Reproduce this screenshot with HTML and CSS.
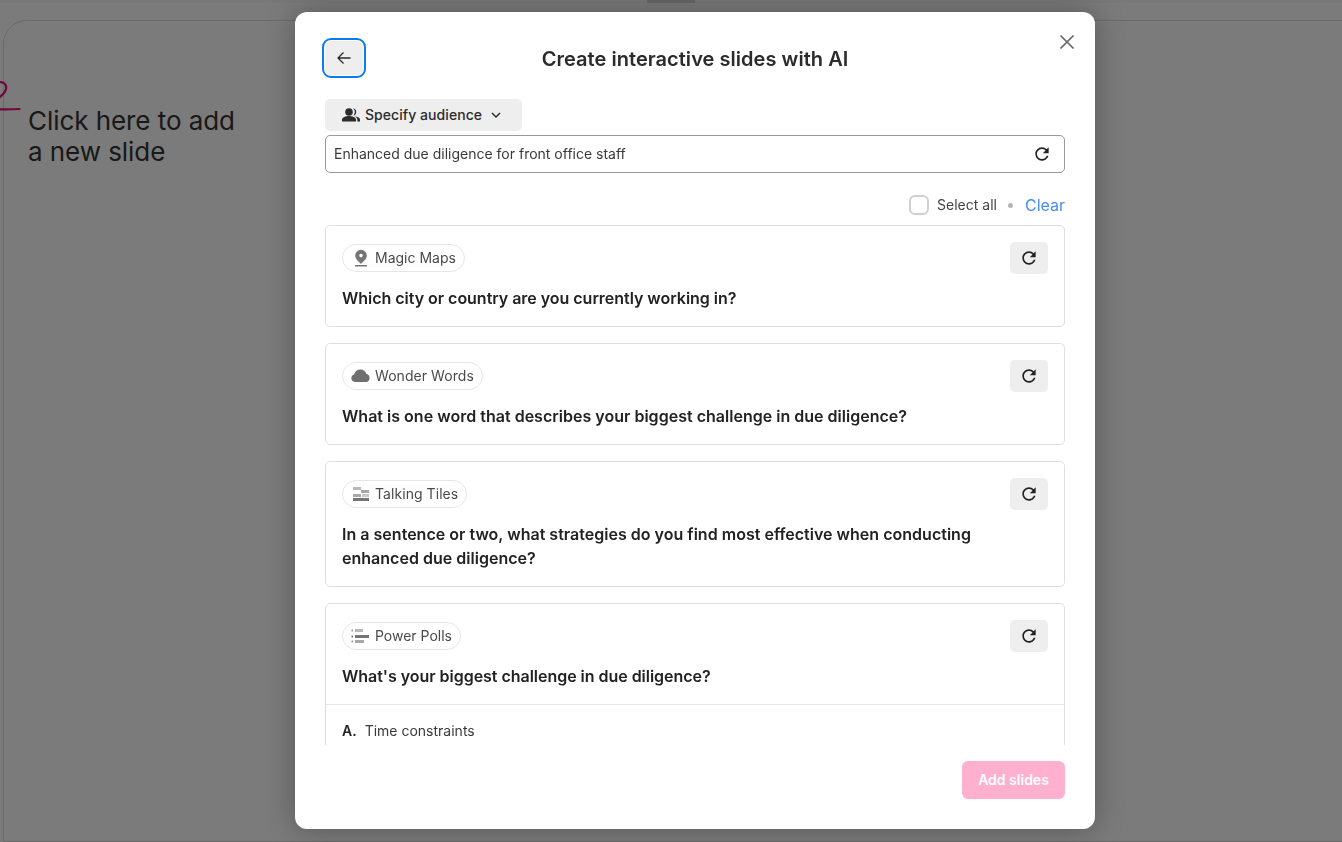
FILE: index.html
```html
<!DOCTYPE html>
<html lang="en">
<head>
<meta charset="utf-8">
<title>Create interactive slides with AI</title>
<link rel="stylesheet" href="styles.css">
</head>
<body>
<div class="page">
  <div class="topbar"><span class="tab-mark"></span></div>
  <div class="canvas">
    <svg class="scribble" width="24" height="36" viewBox="0 0 24 36"><path d="M-2 1.500C3 0 7 3 6 8C5 12 2 15 -2 17M-2 28.300C6 28.500 12 28.500 19.500 28" fill="none" stroke="#e0107c" stroke-width="2.200" stroke-linecap="round"/></svg>
    <p class="hint">Click here to add<br>a new slide</p>
  </div>
</div>
<div class="overlay"></div>
<section class="modal">
  <button class="close" aria-label="Close"><svg width="16" height="16" viewBox="0 0 16 16"><path d="M1.500 1.500L14.500 14.500M14.500 1.500L1.500 14.500" stroke="#666" stroke-width="1.700" fill="none"/></svg></button>
  <header class="head">
    <button class="back" aria-label="Back"><svg width="16" height="16" viewBox="0 0 16 16"><path d="M14.500 8H2.500M7.500 2.500L2 8L7.500 13.500" fill="none" stroke="#2b2b2b" stroke-width="1.300"/></svg></button>
    <h1>Create interactive slides with AI</h1>
  </header>
  <button class="audience">
    <svg width="20" height="20" viewBox="0 0 20 20"><g fill="#2b2b2b"><circle cx="8" cy="7" r="3.800"/><path d="M1 16.500v-2C1 12.500 5 11 8 11s7 1.500 7 3.500v2z"/><path d="M12.300 3.300a3.800 3.800 0 0 1 0 7.400 5.200 5.200 0 0 0 0-7.400z"/><path d="M13.500 11.200c2.600.3 5.500 1.500 5.500 3.300v2h-2.700v-2c0-1.300-1-2.400-2.800-3.300z"/></g></svg>
    <span class="lift">Specify audience</span>
    <svg class="chev" width="12" height="12" viewBox="0 0 12 12"><path d="M2 4L6 8L10 4" fill="none" stroke="#2b2b2b" stroke-width="1.500"/></svg>
  </button>
  <div class="topic">
    <span class="lift">Enhanced due diligence for front office staff</span>
    <svg class="refresh" width="20" height="20" viewBox="0 0 24 24"><path fill="#222" d="M17.650 6.350C16.200 4.900 14.210 4 12 4c-4.420 0-7.990 3.580-7.990 8s3.570 8 7.990 8c3.730 0 6.840-2.550 7.730-6h-2.080c-.82 2.330-3.040 4-5.650 4-3.310 0-6-2.690-6-6s2.690-6 6-6c1.660 0 3.140.69 4.220 1.780L13 11h7V4l-2.350 2.350z"/></svg>
  </div>
  <div class="select-row">
    <span class="check"></span>
    <span class="select-label lift">Select all</span>
    <span class="dot"></span>
    <span class="clear">Clear</span>
  </div>
  <div class="list">
    <article class="card">
      <div class="card-top">
        <span class="chip">
          <svg width="20" height="20" viewBox="0 0 20 20"><path fill="#757575" fill-rule="evenodd" d="M10 1.800a5.800 5.800 0 0 0-5.800 5.800C4.200 11 8 14 10 16c2-2 5.800-5 5.800-8.400A5.800 5.800 0 0 0 10 1.800zm0 4a1.800 1.800 0 1 1 0 3.600 1.800 1.800 0 0 1 0-3.600z"/><rect x="4" y="17" width="12" height="1.500" fill="#757575"/></svg>
          <span class="lift">Magic Maps</span>
        </span>
        <button class="regen" aria-label="Regenerate"><svg width="20" height="20" viewBox="0 0 24 24"><path fill="#222" d="M17.650 6.350C16.200 4.900 14.210 4 12 4c-4.420 0-7.990 3.580-7.990 8s3.570 8 7.990 8c3.730 0 6.840-2.550 7.730-6h-2.080c-.82 2.330-3.040 4-5.650 4-3.310 0-6-2.690-6-6s2.690-6 6-6c1.660 0 3.140.69 4.220 1.780L13 11h7V4l-2.350 2.350z"/></svg></button>
      </div>
      <h2 class="narrow">Which city or country are you currently working in?</h2>
    </article>
    <article class="card">
      <div class="card-top">
        <span class="chip chip-wide">
          <svg width="20" height="20" viewBox="0 0 20 20"><path fill="#6f6f6f" d="M4 16a3.900 3.900 0 0 1-1-7.600C4 5.500 6.200 3.500 9.500 3.500c2.900 0 5 1.700 5.800 4.200A4.300 4.300 0 0 1 15.500 16z"/></svg>
          <span class="lift">Wonder Words</span>
        </span>
        <button class="regen" aria-label="Regenerate"><svg width="20" height="20" viewBox="0 0 24 24"><path fill="#222" d="M17.650 6.350C16.200 4.900 14.210 4 12 4c-4.420 0-7.990 3.580-7.990 8s3.570 8 7.990 8c3.730 0 6.840-2.550 7.730-6h-2.080c-.82 2.330-3.040 4-5.650 4-3.310 0-6-2.690-6-6s2.690-6 6-6c1.660 0 3.140.69 4.220 1.780L13 11h7V4l-2.350 2.350z"/></svg></button>
      </div>
      <h2 class="wide">What is one word that describes your biggest challenge in due diligence?</h2>
    </article>
    <article class="card">
      <div class="card-top">
        <span class="chip chip-wide">
          <svg width="20" height="20" viewBox="0 0 20 20"><rect x="2" y="3" width="8" height="3" fill="#b8b8b8"/><rect x="10" y="6" width="8" height="3" fill="#a8a8a8"/><rect x="2" y="10" width="8" height="3" fill="#a8a8a8"/><rect x="11" y="10" width="7" height="3" fill="#c8c8c8"/><rect x="2" y="14" width="16" height="3" fill="#757575"/></svg>
          <span class="lift">Talking Tiles</span>
        </span>
        <button class="regen" aria-label="Regenerate"><svg width="20" height="20" viewBox="0 0 24 24"><path fill="#222" d="M17.650 6.350C16.200 4.900 14.210 4 12 4c-4.420 0-7.990 3.580-7.990 8s3.570 8 7.990 8c3.730 0 6.840-2.550 7.730-6h-2.080c-.82 2.330-3.040 4-5.650 4-3.310 0-6-2.690-6-6s2.690-6 6-6c1.660 0 3.140.69 4.220 1.780L13 11h7V4l-2.350 2.350z"/></svg></button>
      </div>
      <h2 class="wide">In a sentence or two, what strategies do you find most effective when conducting enhanced due diligence?</h2>
    </article>
    <article class="card">
      <div class="card-top">
        <span class="chip">
          <svg width="20" height="20" viewBox="0 0 20 20"><rect x="0.500" y="3.500" width="1.500" height="2" fill="#999"/><rect x="4" y="3" width="8" height="3" fill="#b8b8b8"/><rect x="0.500" y="9.500" width="1.500" height="2" fill="#777"/><rect x="4" y="9" width="14" height="3" fill="#757575"/><rect x="0.500" y="14.500" width="1.500" height="2" fill="#999"/><rect x="4" y="14" width="9" height="3" fill="#a8a8a8"/></svg>
          <span class="lift">Power Polls</span>
        </span>
        <button class="regen" aria-label="Regenerate"><svg width="20" height="20" viewBox="0 0 24 24"><path fill="#222" d="M17.650 6.350C16.200 4.900 14.210 4 12 4c-4.420 0-7.990 3.580-7.990 8s3.570 8 7.990 8c3.730 0 6.840-2.550 7.730-6h-2.080c-.82 2.330-3.040 4-5.650 4-3.310 0-6-2.690-6-6s2.690-6 6-6c1.660 0 3.140.69 4.220 1.780L13 11h7V4l-2.350 2.350z"/></svg></button>
      </div>
      <h2 class="narrow">What's your biggest challenge in due diligence?</h2>
      <div class="options">
        <div class="option"><b>A.</b> <span>Time constraints</span></div>
      </div>
    </article>
  </div>
  <footer class="foot"><button class="add"><span class="lift">Add slides</span></button></footer>
</section>
</body>
</html>
```

FILE: styles.css
```css
* { box-sizing: border-box; }
html, body { height: 100%; }
body {
  margin: 0;
  overflow: hidden;
  background: #f6f6f6;
  font-family: Inter, "Liberation Sans", sans-serif;
  color: #2b2b2b;
}
button { font-family: inherit; border: 0; padding: 0; }
.lift { display: block; margin-bottom: 2px; }

.page { height: 842px; display: flex; flex-direction: column; }
.topbar { height: 3px; background: #f0f0f0; display: flex; justify-content: center; }
.tab-mark { width: 48px; height: 3px; background: #ccc; }
.canvas {
  position: relative;
  flex: 1;
  margin: 17px -40px 0 3px;
  border: 1px solid #d4d4d4;
  border-radius: 24px 24px 0 0;
  padding: 84px 0 0 24px;
}
.hint { margin: 0; font-size: 26px; line-height: 31px; color: #333; letter-spacing: -.06px; }
.scribble { position: absolute; left: -4px; top: 60px; }

.overlay { position: fixed; inset: 0; background: rgba(0, 0, 0, .5); }

.modal {
  position: absolute;
  left: 295px;
  top: 12px;
  width: 800px;
  height: 817px;
  background: #fff;
  border-radius: 12px;
  padding: 29px 30px 30px;
  display: flex;
  flex-direction: column;
  box-shadow: 0 0 30px rgba(0, 0, 0, .3);
}
.close {
  position: absolute;
  right: 20px;
  top: 22px;
  width: 16px;
  height: 16px;
  background: none;
  display: flex;
}
.head { height: 34px; display: flex; align-items: center; justify-content: center; position: relative; }
.head h1 { margin: 2px 0 0; font-size: 20px; font-weight: 600; line-height: 34px; letter-spacing: .04px; color: #2b2b2b; }
.back {
  position: absolute;
  left: 0;
  top: 0;
  width: 38px;
  height: 34px;
  background: #eee;
  border-radius: 6px;
  display: flex;
  align-items: center;
  justify-content: center;
  outline: 2px solid #0a7cf0;
  outline-offset: 1px;
}
.audience {
  margin-top: 24px;
  align-self: flex-start;
  width: 197px;
  height: 32px;
  background: #eee;
  border-radius: 5px;
  display: flex;
  align-items: center;
  padding-left: 16px;
  gap: 4px;
  font-size: 14px;
  font-weight: 500;
  letter-spacing: .06px;
  color: #2b2b2b;
}
.chev { margin-left: 4px; }
.topic {
  margin-top: 4px;
  height: 38px;
  border: 1px solid #9a9a9a;
  border-radius: 5px;
  display: flex;
  align-items: center;
  justify-content: space-between;
  padding: 0 12px 0 8px;
  font-size: 14px;
  color: #3a3a3a;
  flex: none;
}
.select-row {
  margin-top: 22px;
  height: 20px;
  display: flex;
  align-items: center;
  justify-content: flex-end;
  flex: none;
}
.check { width: 20px; height: 20px; border: 2px solid #cfcfd4; border-radius: 6px; }
.select-label { margin-left: 8px; font-size: 14px; color: #444; }
.dot { width: 5px; height: 5px; border-radius: 50%; background: #b5b5b5; margin: 0 12px 0 11px; }
.clear { font-size: 16px; color: #4a8cf0; }

.list {
  margin-top: 10px;
  height: 520px;
  flex: none;
  overflow: hidden;
  display: flex;
  flex-direction: column;
  gap: 16px;
}
.card { border: 1px solid #dedede; border-radius: 5px; padding: 16px 16px 0; flex: none; }
.card-top { display: flex; justify-content: space-between; align-items: flex-start; }
.chip {
  margin-top: 2px;
  height: 28px;
  display: flex;
  align-items: center;
  gap: 4px;
  padding: 0 8px;
  border: 1px solid #e6e6e6;
  border-radius: 14px;
  font-size: 14px;
  color: #4a4a4a;
}
.chip-wide { letter-spacing: .06px; }
.regen {
  width: 38px;
  height: 32px;
  background: #eee;
  border-radius: 5px;
  display: flex;
  align-items: center;
  justify-content: center;
}
.card h2 {
  margin: 12px 0 16px;
  font-size: 16px;
  line-height: 24px;
  font-weight: 600;
  color: #222;
}
.card h2.narrow { letter-spacing: -.03px; }
.card h2.wide { letter-spacing: .015px; }
.options { margin: 0 -16px; border-top: 1px solid #e6e6e6; padding: 16px 16px 0; }
.option { font-size: 14px; line-height: 20px; margin-bottom: 16px; color: #3a3a3a; display: flex; gap: 8px; }
.option b { font-weight: 600; color: #222; }

.foot { margin-top: 16px; display: flex; justify-content: flex-end; }
.add {
  width: 103px;
  height: 38px;
  background: #ffb0cf;
  border-radius: 6px;
  color: #fff;
  font-size: 14px;
  font-weight: 600;
}
```
